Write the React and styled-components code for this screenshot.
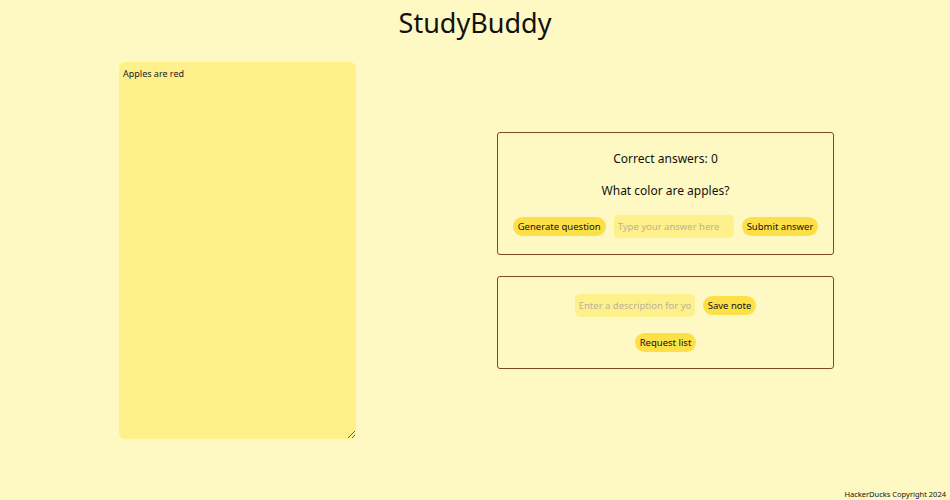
import React from "react";
import styled, { createGlobalStyle } from "styled-components";

const GlobalStyle = createGlobalStyle`
  html, body {
    margin: 0;
    padding: 0;
    background: #fef9c3;
    font-family: "Noto Sans", "Open Sans", sans-serif;
    color: #111;
  }
`;

const Page = styled.div`
  width: 950px;
  height: 500px;
  display: flex;
  flex-direction: column;
  position: relative;
`;

const Title = styled.h1`
  margin: 3px 0 0;
  text-align: center;
  font-weight: 400;
  font-size: 27px;
  line-height: 40px;
`;

const Main = styled.div`
  display: grid;
  grid-template-columns: 475px 475px;
  align-items: center;
  margin-top: 19px;
`;

const LeftCol = styled.div`
  display: flex;
  justify-content: center;
`;

const NoteArea = styled.textarea`
  width: 237px;
  height: 377px;
  box-sizing: border-box;
  background: #fef08a;
  border: none;
  border-radius: 6px;
  padding: 5px 4px;
  font-family: inherit;
  font-size: 9px;
  color: #222;
  outline: none;
  resize: vertical;
`;

const RightCol = styled.div`
  display: flex;
  flex-direction: column;
  gap: 21px;
  padding-left: 22px;
`;

const Card = styled.div`
  width: 337px;
  box-sizing: border-box;
  border: 1px solid #7c4a1e;
  border-radius: 3px;
  display: flex;
  flex-direction: column;
  align-items: center;
  padding: ${(p) => p.$pad};
  gap: 16px;
`;

const Text = styled.div`
  font-size: 12px;
  line-height: 16px;
`;

const Row = styled.div`
  display: flex;
  align-items: center;
  gap: 8px;
`;

const Button = styled.button`
  background: #fde047;
  border: none;
  border-radius: 10px;
  height: 19px;
  padding: 0 5px;
  font-family: inherit;
  font-size: 9.5px;
  color: #111;
  cursor: pointer;
`;

const Input = styled.input`
  width: 120px;
  height: 23px;
  box-sizing: border-box;
  background: #fef08a;
  border: none;
  border-radius: 5px;
  padding: 0 4px;
  font-family: inherit;
  font-size: 9.5px;
  outline: none;
  &::placeholder {
    color: #b9b39a;
  }
`;

const Footer = styled.div`
  position: absolute;
  right: 4px;
  bottom: 1px;
  font-size: 7.5px;
  color: #111;
`;

export default function App() {
  return (
    <>
      <GlobalStyle />
      <Page>
        <Title>StudyBuddy</Title>
        <Main>
          <LeftCol>
            <NoteArea defaultValue="Apples are red" />
          </LeftCol>
          <RightCol>
            <Card $pad="18px 0 16px">
              <Text>Correct answers: 0</Text>
              <Text>What color are apples?</Text>
              <Row>
                <Button>Generate question</Button>
                <Input placeholder="Type your answer here" />
                <Button>Submit answer</Button>
              </Row>
            </Card>
            <Card $pad="17px 0 16px">
              <Row>
                <Input placeholder="Enter a description for your note" />
                <Button>Save note</Button>
              </Row>
              <Button>Request list</Button>
            </Card>
          </RightCol>
        </Main>
        <Footer>HackerDucks Copyright 2024</Footer>
      </Page>
    </>
  );
}
